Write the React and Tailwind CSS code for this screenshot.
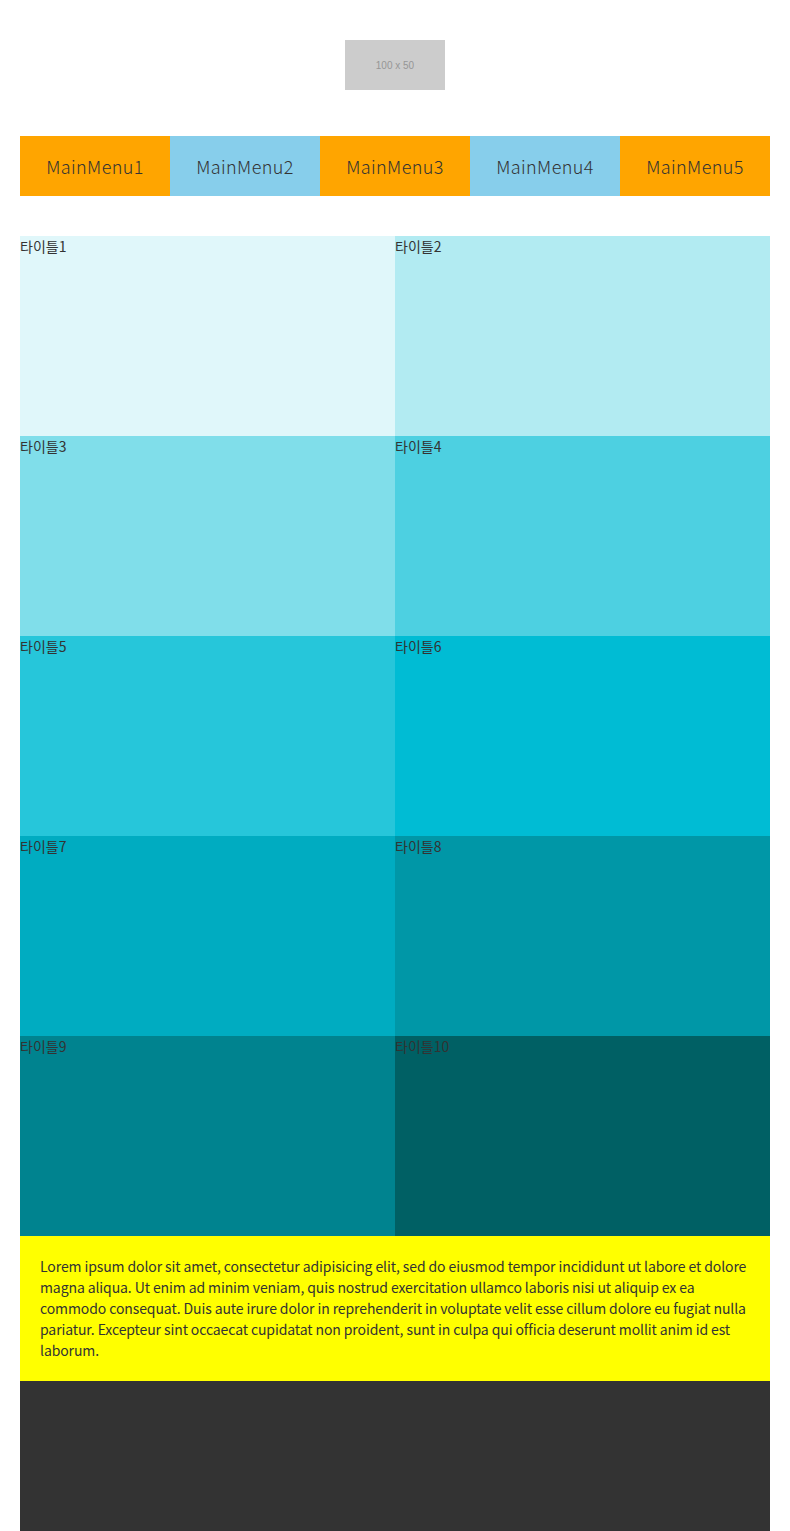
import React from 'react';

const menus = [
  { label: 'MainMenu1', bg: 'bg-[#ffa500]' },
  { label: 'MainMenu2', bg: 'bg-[#87ceeb]' },
  { label: 'MainMenu3', bg: 'bg-[#ffa500]' },
  { label: 'MainMenu4', bg: 'bg-[#87ceeb]' },
  { label: 'MainMenu5', bg: 'bg-[#ffa500]' },
];

const tiles = [
  'bg-[#e0f7fa]',
  'bg-[#b2ebf2]',
  'bg-[#80deea]',
  'bg-[#4dd0e1]',
  'bg-[#26c6da]',
  'bg-[#00bcd4]',
  'bg-[#00acc1]',
  'bg-[#0097a7]',
  'bg-[#00838f]',
  'bg-[#006064]',
];

const App = () => {
  return (
    <div className="px-5 text-[#333] font-['Noto_Sans_CJK_KR',sans-serif]">
      {/* Logo */}
      <div className="flex justify-center pt-10 pb-[46px]">
        <div className="w-[100px] h-[50px] bg-[#ccc] flex items-center justify-center text-[10px] text-[#969696] font-['Liberation_Sans',sans-serif]">
          100 x 50
        </div>
      </div>

      {/* Nav */}
      <nav className="grid grid-cols-5">
        {menus.map((m) => (
          <a key={m.label} href="#" className={`${m.bg} h-[60px] flex items-center justify-center text-lg tracking-[0.4px] font-light`}>
            {m.label}
          </a>
        ))}
      </nav>

      {/* Tiles */}
      <div className="grid grid-cols-2 mt-10">
        {tiles.map((bg, i) => (
          <div key={i} className={`${bg} h-[200px] text-sm leading-[21px]`}>
            타이틀{i + 1}
          </div>
        ))}
      </div>

      {/* Text */}
      <div className="bg-[#ffff00] p-5 text-sm leading-[21px] tracking-[-0.1px]">
        <p>
          Lorem ipsum dolor sit amet, consectetur adipisicing elit, sed do eiusmod tempor incididunt ut labore et dolore magna aliqua. Ut enim ad minim veniam, quis nostrud exercitation ullamco laboris nisi ut aliquip ex ea commodo consequat. Duis aute irure dolor in reprehenderit in voluptate velit esse cillum dolore eu fugiat nulla pariatur. Excepteur sint occaecat cupidatat non proident, sunt in culpa qui officia deserunt mollit anim id est laborum.
        </p>
      </div>

      {/* Footer */}
      <div className="bg-[#333] h-[150px]"></div>
    </div>
  );
};

export default App;
